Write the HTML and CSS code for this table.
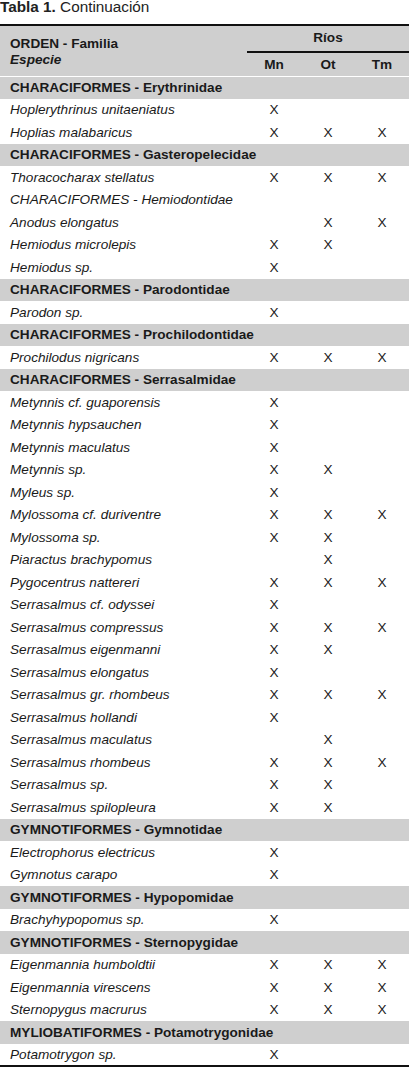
FILE: index.html
```html
<!DOCTYPE html>
<html lang="es">
<head>
<meta charset="utf-8">
<title>Tabla 1. Continuación</title>
<link rel="stylesheet" href="styles.css">
</head>
<body>
<p class="caption"><b>Tabla 1.</b> Continuación</p>
<table class="fish">
  <thead>
    <tr class="h1">
      <th class="sp">ORDEN - Familia</th>
      <th class="rios" colspan="3"><span>Ríos</span></th>
    </tr>
    <tr class="h2">
      <th class="sp"><i>Especie</i></th>
      <th class="c">Mn</th><th class="c">Ot</th><th class="c">Tm</th>
    </tr>
  </thead>
  <tbody>
    <tr class="fam"><td colspan="4">CHARACIFORMES - Erythrinidae</td></tr>
    <tr><td>Hoplerythrinus unitaeniatus</td><td>X</td><td></td><td></td></tr>
    <tr><td>Hoplias malabaricus</td><td>X</td><td>X</td><td>X</td></tr>
    <tr class="fam"><td colspan="4">CHARACIFORMES - Gasteropelecidae</td></tr>
    <tr><td>Thoracocharax stellatus</td><td>X</td><td>X</td><td>X</td></tr>
    <tr><td colspan="4">CHARACIFORMES - Hemiodontidae</td></tr>
    <tr><td>Anodus elongatus</td><td></td><td>X</td><td>X</td></tr>
    <tr><td>Hemiodus microlepis</td><td>X</td><td>X</td><td></td></tr>
    <tr><td>Hemiodus sp.</td><td>X</td><td></td><td></td></tr>
    <tr class="fam"><td colspan="4">CHARACIFORMES - Parodontidae</td></tr>
    <tr><td>Parodon sp.</td><td>X</td><td></td><td></td></tr>
    <tr class="fam"><td colspan="4">CHARACIFORMES - Prochilodontidae</td></tr>
    <tr><td>Prochilodus nigricans</td><td>X</td><td>X</td><td>X</td></tr>
    <tr class="fam"><td colspan="4">CHARACIFORMES - Serrasalmidae</td></tr>
    <tr><td>Metynnis cf. guaporensis</td><td>X</td><td></td><td></td></tr>
    <tr><td>Metynnis hypsauchen</td><td>X</td><td></td><td></td></tr>
    <tr><td>Metynnis maculatus</td><td>X</td><td></td><td></td></tr>
    <tr><td>Metynnis sp.</td><td>X</td><td>X</td><td></td></tr>
    <tr><td>Myleus sp.</td><td>X</td><td></td><td></td></tr>
    <tr><td>Mylossoma cf. duriventre</td><td>X</td><td>X</td><td>X</td></tr>
    <tr><td>Mylossoma sp.</td><td>X</td><td>X</td><td></td></tr>
    <tr><td>Piaractus brachypomus</td><td></td><td>X</td><td></td></tr>
    <tr><td>Pygocentrus nattereri</td><td>X</td><td>X</td><td>X</td></tr>
    <tr><td>Serrasalmus cf. odyssei</td><td>X</td><td></td><td></td></tr>
    <tr><td>Serrasalmus compressus</td><td>X</td><td>X</td><td>X</td></tr>
    <tr><td>Serrasalmus eigenmanni</td><td>X</td><td>X</td><td></td></tr>
    <tr><td>Serrasalmus elongatus</td><td>X</td><td></td><td></td></tr>
    <tr><td>Serrasalmus gr. rhombeus</td><td>X</td><td>X</td><td>X</td></tr>
    <tr><td>Serrasalmus hollandi</td><td>X</td><td></td><td></td></tr>
    <tr><td>Serrasalmus maculatus</td><td></td><td>X</td><td></td></tr>
    <tr><td>Serrasalmus rhombeus</td><td>X</td><td>X</td><td>X</td></tr>
    <tr><td>Serrasalmus sp.</td><td>X</td><td>X</td><td></td></tr>
    <tr><td>Serrasalmus spilopleura</td><td>X</td><td>X</td><td></td></tr>
    <tr class="fam"><td colspan="4">GYMNOTIFORMES - Gymnotidae</td></tr>
    <tr><td>Electrophorus electricus</td><td>X</td><td></td><td></td></tr>
    <tr><td>Gymnotus carapo</td><td>X</td><td></td><td></td></tr>
    <tr class="fam"><td colspan="4">GYMNOTIFORMES - Hypopomidae</td></tr>
    <tr><td>Brachyhypopomus sp.</td><td>X</td><td></td><td></td></tr>
    <tr class="fam"><td colspan="4">GYMNOTIFORMES - Sternopygidae</td></tr>
    <tr><td>Eigenmannia humboldtii</td><td>X</td><td>X</td><td>X</td></tr>
    <tr><td>Eigenmannia virescens</td><td>X</td><td>X</td><td>X</td></tr>
    <tr><td>Sternopygus macrurus</td><td>X</td><td>X</td><td>X</td></tr>
    <tr class="fam"><td colspan="4">MYLIOBATIFORMES - Potamotrygonidae</td></tr>
    <tr><td>Potamotrygon sp.</td><td>X</td><td></td><td></td></tr>
  </tbody>
</table>
</body>
</html>
```
FILE: styles.css
```css
html, body {
  margin: 0;
  padding: 0;
  background: #ffffff;
}
body {
  font-family: "Liberation Sans", Arial, sans-serif;
  font-size: 13.6px;
  color: #111111;
  width: 410px;
}
.caption {
  margin: 0;
  height: 24px;
  line-height: 13px;
  font-size: 15.3px;
  color: #222222;
}
.caption b {
  font-weight: bold;
}
.fish {
  width: 409px;
  border-collapse: collapse;
  table-layout: fixed;
  border-top: 2px solid #111111;
  border-bottom: 2px solid #111111;
}
.fish th, .fish td {
  padding: 0;
  font-size: 13.6px;
}
.fish thead tr {
  background: #cfcfcf;
}
.fish thead th {
  font-weight: bold;
  color: #1a1a1a;
}
.fish .h1 {
  height: 27px;
}
.fish .h2 {
  height: 24px;
  border-bottom: 1px solid #ffffff;
}
.fish .sp {
  width: 237px;
  text-align: left;
  padding-left: 10px;
}
.fish .h1 .sp {
  vertical-align: bottom;
  line-height: 16px;
}
.fish .h2 .sp {
  vertical-align: top;
  line-height: 16px;
}
.fish .rios {
  vertical-align: top;
  text-align: center;
  padding-top: 4px;
  border-bottom: 2px solid #111111;
}
.fish .c {
  text-align: center;
  vertical-align: middle;
  width: 54px;
}
.fish tbody tr {
  height: 22.5px;
}
.fish tbody td {
  text-align: center;
  vertical-align: middle;
  line-height: 15px;
  color: #1a1a1a;
}
.fish tbody td:first-child {
  text-align: left;
  padding-left: 10px;
  font-style: italic;
}
.fish tbody tr.fam td {
  background: #cfcfcf;
  font-style: normal;
  font-weight: bold;
}
```
